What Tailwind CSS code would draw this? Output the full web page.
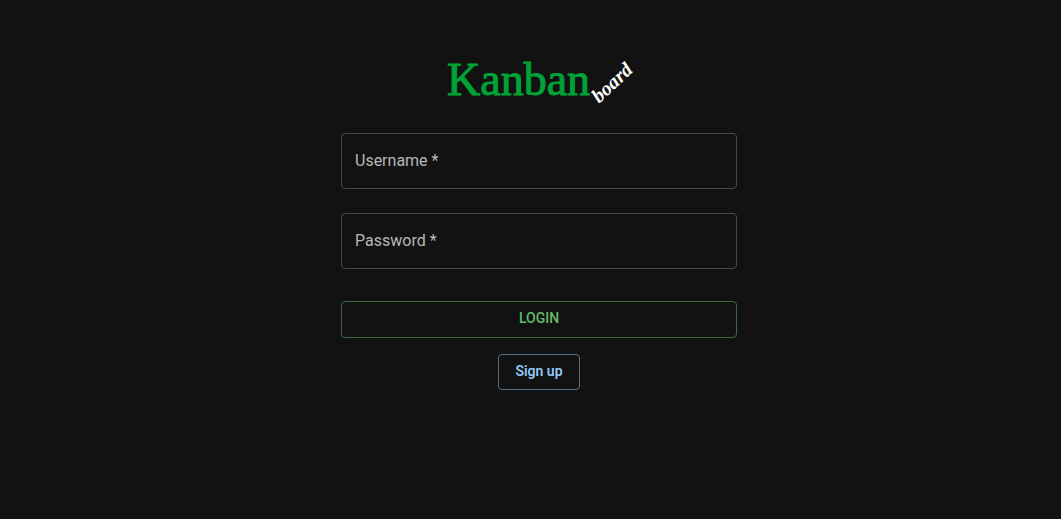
<!DOCTYPE html>
<html lang="en">
<head>
<meta charset="utf-8">
<meta name="viewport" content="width=device-width, initial-scale=1">
<title>Kanban board</title>
<script src="https://cdn.jsdelivr.net/npm/@tailwindcss/browser@4"></script>
</head>
<body class="min-h-screen bg-[#121212] font-[Roboto,sans-serif]">
<main class="flex justify-center pl-[17px] pt-14">
  <form class="flex w-full max-w-[396px] flex-col items-center">
    <h1 class="relative h-12 w-[184px] font-['Liberation_Serif',serif]">
      <span class="block text-[46px] leading-12 text-[#00a336] [-webkit-text-stroke:1px_#00a336]">Kanban</span>
      <span class="absolute left-[154px] top-[30px] origin-bottom-left -rotate-43 text-xl leading-5 font-bold italic text-white">board</span>
    </h1>
    <div class="relative mt-[29px] w-full">
      <input id="username" type="text" required placeholder=" " class="peer block h-14 w-full rounded border border-[#494949] bg-transparent px-3.5 text-base text-white outline-none">
      <label for="username" class="pointer-events-none absolute left-3.5 top-4 text-base leading-6 text-[#b8b8b8] peer-focus:hidden peer-[:not(:placeholder-shown)]:hidden">Username *</label>
    </div>
    <div class="relative mt-6 w-full">
      <input id="password" type="password" required placeholder=" " class="peer block h-14 w-full rounded border border-[#494949] bg-transparent px-3.5 text-base text-white outline-none">
      <label for="password" class="pointer-events-none absolute left-3.5 top-4 text-base leading-6 text-[#b8b8b8] peer-focus:hidden peer-[:not(:placeholder-shown)]:hidden">Password *</label>
    </div>
    <button type="submit" class="mt-8 w-full rounded border border-[#3d6b3f] px-4 pt-1 pb-[7px] text-sm leading-6 font-medium text-[#66bb6a]">LOGIN</button>
    <a href="#signup" class="mt-4 rounded border border-[#50708a] px-4 pt-1 pb-1.5 text-sm leading-6 font-semibold text-[#90caf9]">Sign up</a>
  </form>
</main>
</body>
</html>
